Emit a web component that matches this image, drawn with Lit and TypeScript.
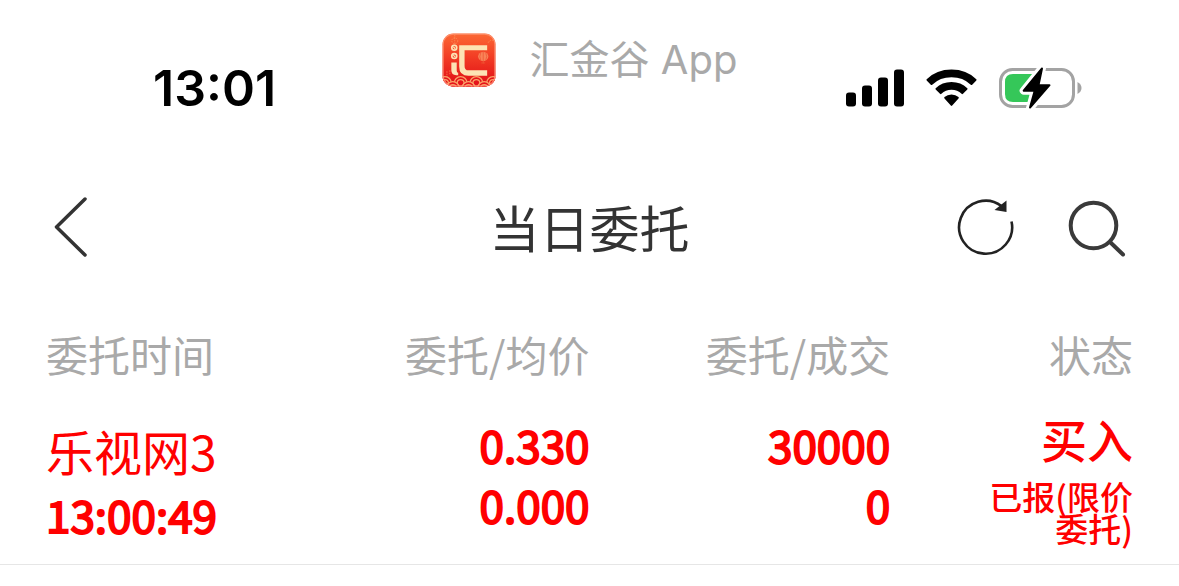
import { LitElement, html, css } from "lit";
import { customElement, property } from "lit/decorators.js";

interface Order {
  name: string;
  time: string;
  price: string;
  average: string;
  amount: string;
  filled: string;
  side: string;
  status: string;
}

@customElement("status-bar")
class StatusBar extends LitElement {
  static styles = css`
    :host { display: block; }
    .bar {
      display: grid;
      grid-template-columns: 1fr auto 1fr;
      align-items: start;
      padding: 30px 97px 18px;
      line-height: 60px;
    }
    .time {
      margin-top: 28px;
      padding-left: 56px;
      font-family: Inter, sans-serif;
      font-size: 50px;
      font-weight: 600;
      color: #000;
    }
    .brand {
      display: flex;
      align-items: center;
      gap: 34px;
      font-family: Inter, "Noto Sans CJK SC", sans-serif;
      font-size: 40px;
      color: #a9a9a9;
      white-space: nowrap;
    }
    .logo { display: block; width: 54px; height: 54px; }
    .signals {
      display: flex;
      align-items: center;
      justify-content: flex-end;
      gap: 22px;
      height: 60px;
      margin-top: 28px;
    }
    .signals svg { display: block; }
  `;

  render() {
    return html`
      <header class="bar">
        <time class="time">13:01</time>
        <div class="brand">
          <svg class="logo" viewBox="0 0 55 55" aria-hidden="true">
            <defs>
              <linearGradient id="face" x1="0" y1="0" x2="0" y2="1">
                <stop offset="0" stop-color="#fc6a36" />
                <stop offset="0.45" stop-color="#f23d25" />
                <stop offset="1" stop-color="#e00c16" />
              </linearGradient>
              <clipPath id="tile"><rect width="54" height="54" x=".5" y=".5" rx="11" /></clipPath>
            </defs>
            <g clip-path="url(#tile)">
              <rect width="55" height="55" fill="url(#face)" />
              <g fill="none" stroke="#ff9c60" stroke-width=".8" stroke-dasharray="1.5 1" opacity=".8">
                <circle cx="13" cy="8" r="3" /><path d="M13 2v12M47 10q2-4 6-2" /><path d="M5 39v9M8 38v5" />
              </g>
              <g fill="none" stroke="#fde3b4" stroke-width="1.7">
                <circle cx="12.5" cy="15" r="2.5" /><circle cx="12.5" cy="23.5" r="2.5" />
              </g>
              <path d="M11.500 14l2 2M11.500 22.500l2 2" stroke="#fde3b4" stroke-width="1.200" />
              <path d="M9.500 30h5.500v8.500q0 2 1.500 2v2.500h-2q-5 0-5-5z" fill="#fde3b4" />
              <path d="M17.500 12.500H46v5H23v16q0 4.500 4 4.500h19v5.500H27q-9.500 0-9.500-9.500z" fill="#fde3b4" />
              <ellipse cx="42" cy="24" rx="5.200" ry="4.700" fill="#f98458" />
              <path d="M42 18v13M39.500 20q-2 4 0 8M44.500 20q2 4 0 8M40 30.500h4" fill="none" stroke="#ef5735" stroke-width=".8" />
              <g fill="#e5131a" stroke="#fba368" stroke-width="1.300">
                <circle cx="3" cy="51" r="6.500" /><circle cx="3" cy="51" r="3.500" />
                <circle cx="19" cy="51" r="6.500" /><circle cx="19" cy="51" r="3.500" />
                <circle cx="35" cy="51" r="6.500" /><circle cx="35" cy="51" r="3.500" />
                <circle cx="52" cy="51" r="6.500" /><circle cx="52" cy="51" r="3.500" />
                <circle cx="11" cy="56" r="6.500" /><circle cx="11" cy="56" r="3.500" />
                <circle cx="27" cy="56" r="6.500" /><circle cx="27" cy="56" r="3.500" />
                <circle cx="43" cy="56" r="6.500" /><circle cx="43" cy="56" r="3.500" />
              </g>
              <rect x="1" y="1" width="53" height="53" rx="10.500" fill="none" stroke="#ff9878" stroke-width="1.500" opacity=".8" />
            </g>
          </svg>
          <span>汇金谷 App</span>
        </div>
        <div class="signals">
          <svg width="58" height="38" viewBox="0 0 58 38" aria-label="信号" role="img">
            <rect y="23.500" width="10" height="14" rx="3" />
            <rect x="16" y="16.500" width="10" height="21" rx="3" />
            <rect x="32" y="8.500" width="10" height="29" rx="3" />
            <rect x="48" y=".5" width="10" height="37" rx="3" />
          </svg>
          <svg width="51" height="38" viewBox="0 0 51 38" aria-label="无线网络" role="img">
            <path d="M.7 10.200Q10.500.5 25.500.5T50.300 10.200q.6.600 0 1.200l-4.100 4.300q-.7.700-1.400 0Q37 8.300 25.500 8.300T6.200 15.700q-.7.700-1.400 0L.7 11.400q-.6-.6 0-1.200z" />
            <path d="M9.700 19.300Q16 13 25.500 13t15.800 6.300q.6.600 0 1.200l-4.300 4.300q-.7.700-1.400 0-4.100-4.100-10.100-4.100t-10.100 4.100q-.7.700-1.400 0l-4.300-4.300q-.6-.6 0-1.200z" />
            <path d="M18.500 28.100q2.900-2.600 7-2.600t7 2.600q.7.600 0 1.300l-6.300 7.200q-.7.800-1.400 0l-6.300-7.200q-.7-.7 0-1.300z" />
          </svg>
          <svg width="83" height="42" viewBox="0 0 83 42" aria-label="充电中" role="img">
            <rect x="1.500" y="2.500" width="73" height="37" rx="12" fill="#fff" stroke="#a3a3a3" stroke-width="3" />
            <path d="M14 7h20v28H14q-8 0-8-8V15q0-8 8-8z" fill="#35c759" />
            <path d="M78.500 15q4 2.200 4 6t-4 6z" fill="#a3a3a3" />
            <path d="M43 1 24.700 23.700h11L31 41 50.500 18.200H39.500z" fill="#fff" stroke="#fff" stroke-width="8" stroke-linejoin="round" />
            <path d="M43 1.500 24.700 23.700h11L31 40.500 50.500 18.200H39.500z" stroke="#000" stroke-width="2" stroke-linejoin="round" />
          </svg>
        </div>
      </header>
    `;
  }
}

@customElement("title-bar")
class TitleBar extends LitElement {
  static styles = css`
    :host { display: block; }
    .bar {
      display: grid;
      grid-template-columns: 1fr auto 1fr;
      align-items: end;
      padding: 58px 50px 0;
    }
    h1 {
      margin: 0;
      font-size: 50px;
      line-height: 64px;
      font-weight: 400;
      color: #333;
    }
    button {
      display: block;
      padding: 0;
      border: 0;
      background: none;
      cursor: pointer;
    }
    button svg { display: block; fill: none; stroke-linecap: round; }
    .actions { display: flex; justify-content: flex-end; gap: 50px; }
  `;

  render() {
    return html`
      <nav class="bar">
        <button aria-label="返回">
          <svg width="42" height="62" viewBox="0 0 42 62" stroke="#333" stroke-width="3.500">
            <path d="M35 3 6.500 31 35 59" stroke-linejoin="round" />
          </svg>
        </button>
        <h1>当日委托</h1>
        <div class="actions">
          <button aria-label="刷新">
            <svg width="62" height="62" viewBox="0 0 62 62" stroke="#222" stroke-width="2.600">
              <path d="M56.500 25.500A26.500 26.500 0 1 1 46.500 10" stroke-linecap="butt" />
              <path d="M51.500 4.500v11.500l-12-2z" fill="#222" stroke="none" />
            </svg>
          </button>
          <button aria-label="搜索">
            <svg width="62" height="62" viewBox="0 0 62 62" stroke="#3a3a3a">
              <circle cx="26.500" cy="29.500" r="22.800" stroke-width="4" />
              <path d="M43.500 46.500 56 58.500" stroke-width="4" />
            </svg>
          </button>
        </div>
      </nav>
    `;
  }
}

@customElement("order-table")
class OrderTable extends LitElement {
  @property({ attribute: false }) orders: Order[] = [];

  static styles = css`
    :host { display: block; }
    table {
      width: 100%;
      table-layout: fixed;
      border-collapse: separate;
      border-spacing: 0;
      text-align: right;
    }
    .col-name, .col-price { width: 25%; }
    .col-amount { width: 25.5%; }
    th {
      padding: 0;
      font-size: 42px;
      line-height: 60px;
      font-weight: 400;
      color: #a9a9a9;
      white-space: nowrap;
    }
    td {
      padding: 0 0 18px;
      vertical-align: top;
      color: #f00;
      border-bottom: 1px solid #e6e6e6;
    }
    th:first-child, td:first-child { padding-left: 46px; text-align: left; }
    th:last-child, td:last-child { padding-right: 46px; }
    td:first-child { padding-top: 34px; }
    .number { padding-top: 30px; }
    td:last-child { padding-top: 28px; padding-left: 83px; }
    .name { font-size: 48px; line-height: 64px; white-space: nowrap; }
    .time, .value {
      font-size: 44px;
      -webkit-text-stroke: 2px currentColor;
    }
    .time { line-height: 64px; }
    .value { line-height: 60px; }
    .side, .status { font-weight: 500; }
    .side { font-size: 46px; line-height: 52px; }
    .status { padding-top: 16px; font-size: 33px; line-height: 32px; }
  `;

  render() {
    return html`
      <table>
        <colgroup>
          <col class="col-name" /><col class="col-price" /><col class="col-amount" /><col />
        </colgroup>
        <thead>
          <tr>
            <th scope="col">委托时间</th>
            <th scope="col">委托/均价</th>
            <th scope="col">委托/成交</th>
            <th scope="col">状态</th>
          </tr>
        </thead>
        <tbody>
          ${this.orders.map(
            (o) => html`
              <tr>
                <td><div class="name">${o.name}</div><div class="time">${o.time}</div></td>
                <td class="number"><div class="value">${o.price}</div><div class="value">${o.average}</div></td>
                <td class="number"><div class="value">${o.amount}</div><div class="value">${o.filled}</div></td>
                <td><div class="side">${o.side}</div><div class="status">${o.status}</div></td>
              </tr>
            `
          )}
        </tbody>
      </table>
    `;
  }
}

@customElement("app-root")
class AppRoot extends LitElement {
  static styles = css`
    :host {
      display: block;
      min-height: 100vh;
      background: #fff;
      font-family: "Noto Sans CJK SC", sans-serif;
    }
    title-bar { padding-bottom: 66px; }
  `;

  private orders: Order[] = [
    {
      name: "乐视网3",
      time: "13:00:49",
      price: "0.330",
      average: "0.000",
      amount: "30000",
      filled: "0",
      side: "买入",
      status: "已报(限价委托)",
    },
  ];

  render() {
    return html`
      <status-bar></status-bar>
      <title-bar></title-bar>
      <order-table .orders=${this.orders}></order-table>
    `;
  }
}
